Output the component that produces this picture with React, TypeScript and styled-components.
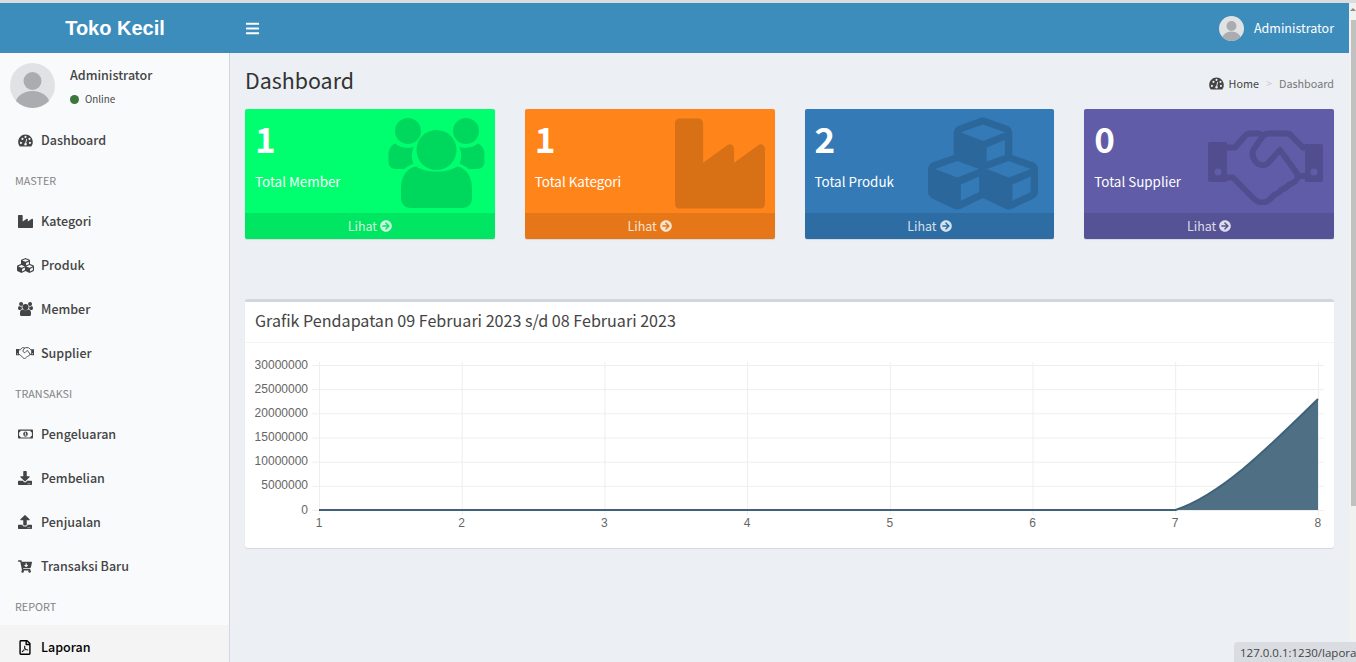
import React from 'react';
import styled, { createGlobalStyle } from 'styled-components';
import {
  FaArrowCircleRight,
  FaBars,
  FaCartArrowDown,
  FaCubes,
  FaDownload,
  FaIndustry,
  FaRegFilePdf,
  FaRegMoneyBillAlt,
  FaUpload,
} from 'react-icons/fa';

const sans = '"Noto Sans CJK SC", "Noto Sans", sans-serif';

const GlobalStyle = createGlobalStyle`
  html, body {
    margin: 0;
    height: 100%;
    overflow: hidden;
  }

  body {
    background: #ecf0f5;
    font-family: ${sans};
    font-size: 12.5px;
    line-height: 20px;
    color: #333;
  }
`;

const Window = styled.div`
  display: flex;
  flex-direction: column;
  height: 662px;
  overflow: hidden;
  position: relative;
  background: #ecf0f5;
`;

const BrowserEdge = styled.div`
  height: 3px;
  flex: none;
  background: #dcdcdc;
`;

const Frame = styled.div`
  display: flex;
  flex: 1;
  min-height: 0;
`;

const Wrapper = styled.div`
  flex: 1;
  min-width: 0;
  display: flex;
  flex-direction: column;
`;

const ScrollTrack = styled.div`
  width: 7px;
  flex: none;
  background: #f1f1f1;
  display: flex;
  flex-direction: column;
  align-items: flex-end;
  padding-top: 5px;
`;

const ScrollArrow = styled.div`
  width: 0;
  height: 0;
  border-left: 3px solid transparent;
  border-right: 3px solid transparent;
  border-bottom: 3px solid #8a8a8a;
`;

const ScrollThumb = styled.div`
  width: 5px;
  height: 486px;
  margin-top: 9px;
  background: #c1c1c1;
`;

const StatusTip = styled.div`
  position: absolute;
  right: 0;
  bottom: 0;
  width: 116px;
  height: 20px;
  padding-left: 6px;
  overflow: hidden;
  white-space: nowrap;
  background: #d9dce0;
  border-top-left-radius: 4px;
  font-family: "Open Sans", sans-serif;
  font-size: 11.5px;
  line-height: 21px;
  color: #444;
`;

const Header = styled.header`
  display: flex;
  align-items: center;
  height: 50px;
  flex: none;
  background: #3c8dbc;
  color: #fff;
`;

const Logo = styled.div`
  width: 230px;
  flex: none;
  text-align: center;
  font-family: "Liberation Sans", Arial, sans-serif;
  font-size: 20px;
  font-weight: 700;
  line-height: 50px;
`;

const MenuToggle = styled.div`
  display: flex;
  margin-left: 15px;
  font-size: 15px;
`;

const HeaderUser = styled.div`
  display: flex;
  align-items: center;
  gap: 10px;
  margin-left: auto;
  padding-right: 15px;
`;

const Body = styled.div`
  display: flex;
  flex: 1;
  min-height: 0;
`;

const Sidebar = styled.aside`
  width: 230px;
  flex: none;
  box-sizing: border-box;
  overflow: hidden;
  background: #f9fafc;
  border-right: 1px solid #d2d6de;
`;

const UserPanel = styled.div`
  display: flex;
  height: 65px;
  box-sizing: border-box;
  padding: 10px;
  gap: 15px;
`;

const UserInfo = styled.div`
  display: flex;
  flex-direction: column;
  padding-top: 2px;
`;

const UserName = styled.div`
  font-weight: 500;
  color: #444;
  line-height: 20px;
`;

const UserStatus = styled.div`
  display: flex;
  align-items: center;
  gap: 6px;
  margin-top: 5px;
  font-size: 9.8px;
  line-height: 18px;
  color: #444;
`;

const StatusDot = styled.span`
  width: 9px;
  height: 9px;
  border-radius: 50%;
  background: #3c763d;
`;

const Menu = styled.nav`
  display: flex;
  flex-direction: column;
`;

const MenuHeader = styled.div`
  height: 37px;
  box-sizing: border-box;
  padding: 10px 15px;
  font-size: 10.8px;
  line-height: 17px;
  color: #848484;
`;

const MenuItem = styled.div<{ $active?: boolean }>`
  display: flex;
  align-items: center;
  flex: none;
  height: 44px;
  padding-left: 15px;
  font-weight: 500;
  color: ${({ $active }) => ($active ? '#000' : '#444')};
  background: ${({ $active }) => ($active ? '#f4f4f5' : 'transparent')};
`;

const MenuIcon = styled.span<{ $w?: number; $h?: number }>`
  display: flex;
  align-items: center;
  justify-content: center;
  width: 20px;
  margin-right: 6px;

  svg {
    flex: none;
    width: ${({ $w }) => $w ?? 14}px;
    height: ${({ $h, $w }) => $h ?? $w ?? 14}px;
  }
`;

const Content = styled.main`
  flex: 1;
  min-width: 0;
  padding: 14px 15px 0;
  display: flex;
  flex-direction: column;
`;

const ContentHeader = styled.div`
  display: flex;
  align-items: flex-start;
  justify-content: space-between;
  height: 26px;
  margin-bottom: 16px;
`;

const PageTitle = styled.h1`
  margin: 0;
  font-size: 21.4px;
  font-weight: 400;
  line-height: 26px;
  color: #333;
`;

const Breadcrumb = styled.div`
  display: flex;
  align-items: center;
  margin-top: 6px;
  font-size: 10.8px;
  color: #444;
`;

const CrumbIcon = styled.span`
  display: flex;
  margin-right: 5px;
`;

const CrumbSep = styled.span`
  margin: 0 7px;
  color: #ccc;
`;

const CrumbCurrent = styled.span`
  color: #777;
`;

const StatGrid = styled.div`
  display: grid;
  grid-template-columns: repeat(4, 1fr);
  gap: 30px;
`;

const StatCard = styled.div<{ $bg: string }>`
  position: relative;
  height: 130px;
  overflow: hidden;
  display: flex;
  flex-direction: column;
  border-radius: 2px;
  background: ${({ $bg }) => $bg};
  color: #fff;
  box-shadow: 0 1px 1px rgba(0, 0, 0, 0.1);
`;

const StatInner = styled.div`
  flex: 1;
  padding: 8px 10px 10px;
`;

const StatValue = styled.div`
  font-size: 35px;
  font-weight: 700;
  line-height: 41px;
`;

const StatLabel = styled.div`
  margin-top: 13px;
  font-size: 13.4px;
  line-height: 20px;
`;

const StatGlyph = styled.div<{ $width: number; $height: number; $top: number; $right: number }>`
  position: absolute;
  top: ${({ $top }) => $top}px;
  right: ${({ $right }) => $right}px;
  display: flex;
  color: #000;
  opacity: 0.15;

  svg {
    width: ${({ $width }) => $width}px;
    height: ${({ $height }) => $height}px;
  }
`;

const StatFooter = styled.div`
  position: relative;
  display: flex;
  align-items: center;
  justify-content: center;
  gap: 3px;
  height: 26px;
  flex: none;
  background: rgba(0, 0, 0, 0.1);
  color: rgba(255, 255, 255, 0.8);
`;

const ChartBox = styled.section`
  margin-top: 60px;
  height: 249px;
  box-sizing: border-box;
  display: flex;
  flex-direction: column;
  background: #fff;
  border-top: 3px solid #d2d6de;
  border-radius: 3px;
  box-shadow: 0 1px 1px rgba(0, 0, 0, 0.1);
`;

const ChartHeader = styled.div`
  height: 41px;
  flex: none;
  box-sizing: border-box;
  padding: 8px 10px;
  border-bottom: 1px solid #f4f4f4;
  font-size: 16.1px;
  line-height: 20px;
  color: #444;
`;

const ChartBody = styled.div`
  padding: 10px;
`;

const ChartSvg = styled.svg`
  display: block;
  width: 1069px;
  height: 185px;
`;

const AxisText = styled.text`
  font-family: "Liberation Sans", Arial, sans-serif;
  font-size: 12px;
  fill: #666;
`;

function Gauge() {
  // the old font-awesome dashboard dial, not in the icon packs
  return (
    <svg width="15" height="13" viewBox="0 0 15 13" fill="currentColor">
      <path
        fillRule="evenodd"
        d="M7.5 0.5C3.4 0.5 0.2 3.8 0.2 7.9c0 1.6 0.5 3.1 1.4 4.3 0.2 0.2 0.4 0.3 0.7 0.3h10.4c0.3 0 0.5-0.1 0.7-0.3 0.9-1.2 1.4-2.7 1.4-4.3C14.7 3.8 11.6 0.5 7.5 0.5zM2 8.9a1 1 0 1 0 0-0.1zM3.5 4.9a1 1 0 1 0 0-0.1zM6.5 3a1 1 0 1 0 0-0.1zM10.5 4.9a1 1 0 1 0 0-0.1zM11 8.9a1 1 0 1 0 0-0.1zM6.2 10.2a1.3 1.3 0 1 0 2.6 0c0-0.5-0.3-0.9-0.6-1.1l0.8-3.6c0.1-0.3-0.1-0.5-0.3-0.6-0.3-0.1-0.5 0.1-0.6 0.4l-0.8 3.6c-0.6 0.1-1.1 0.6-1.1 1.3z"
      />
    </svg>
  );
}

function PeopleGlyph() {
  // three-person glyph of the member card, drawn to the reference
  return (
    <svg viewBox="0 0 97 90" fill="currentColor">
      <circle cx="20" cy="13" r="13" />
      <circle cx="78" cy="13" r="13" />
      <circle cx="48.5" cy="32" r="20" />
      <path d="M7 25.5c3.5 2.8 7.5 4.3 13 4.3 2.5 0 4.5-0.4 6-1-1.5 3-2.4 6.5-2.2 10.2 0.2 2.5 0.8 4.8 1.7 6.8-3.5 1-6.5 3-9 5.2H8c-5 0-7.5-3-7.5-7.5v-7c0-5 2-8.5 6.5-11z" />
      <path d="M90 25.5c-3.5 2.8-7.5 4.3-13 4.3-2.5 0-4.5-0.4-6-1 1.5 3 2.4 6.5 2.2 10.2-0.2 2.5-0.8 4.8-1.7 6.8 3.5 1 6.5 3 9 5.2H89c5 0 7.5-3 7.5-7.5v-7c0-5-2-8.5-6.5-11z" />
      <path d="M28 48.5c5 3.5 12 5 20.5 5s15.5-1.5 20.5-5c9 1.5 15 9.5 15 22.5v9c0 6-4 10-10 10H23c-6 0-10-4-10-10v-9c0-13 6-21 15-22.5z" />
    </svg>
  );
}

function HandshakeGlyph({ weight = 6 }: { weight?: number }) {
  // the outlined handshake of the older icon font, traced from the reference
  return (
    <svg viewBox="8 5 115 75" fill="none" stroke="currentColor" strokeWidth={weight} strokeLinejoin="round" strokeLinecap="round">
      <path
        fill="currentColor"
        stroke="none"
        fillRule="evenodd"
        d="M10 17h17v40H10c-1.2 0-2-0.8-2-2V19c0-1.2 0.8-2 2-2zM18 43.5a3.5 3.5 0 1 0 0 7 3.5 3.5 0 1 0 0-7zM105 19h16c1.2 0 2 0.8 2 2v34c0 1.2-0.8 2-2 2h-16zM114 43.5a3.5 3.5 0 1 0 0 7 3.5 3.5 0 1 0 0-7z"
      />
      <path d="M27 22.5h8L44 12c1.5-2 3.5-3.5 6-3.5h8c2 0 3.5 1 5 2.5L54.5 23c-2.5 3.5-2.5 8 0 12 2.5 4.5 9 7 13 3.5 3-2.5 8-9 12.5-13.5L97.5 49c1 2 0.5 4.5-1.5 6.5-2 2.5-5 3-7.5 4.5-2 3-5 4-7.5 5-1.5 3-4.5 4-7 5-3 4-7.5 7.5-12 7.5-3.5 0-6.5-2-9-4.5L33 52.5h-6" />
      <path d="M63 11c1.5-1.5 3.5-2.5 6-2.5h17c2.5 0 4.5 1 6 3l11 11h2M97.5 51H105" />
    </svg>
  );
}

function Avatar({ size }: { size: number }) {
  return (
    <svg width={size} height={size} viewBox="0 0 45 45">
      <defs>
        <clipPath id={`avatar-${size}`}>
          <circle cx="22.5" cy="22.5" r="22.5" />
        </clipPath>
      </defs>
      <circle cx="22.5" cy="22.5" r="22.5" fill="#e1e2e4" />
      <g clipPath={`url(#avatar-${size})`} fill="#abacb0">
        <circle cx="22.5" cy="18" r="9" />
        <ellipse cx="22.5" cy="41" rx="17" ry="13" />
      </g>
    </svg>
  );
}

const stats = [
  {
    value: 1,
    label: 'Total Member',
    bg: '#00ff6e',
    glyph: <PeopleGlyph />,
    w: 97,
    h: 90,
    top: 9,
    right: 10,
  },
  {
    value: 1,
    label: 'Total Kategori',
    bg: '#ff851b',
    glyph: <FaIndustry preserveAspectRatio="none" />,
    w: 90,
    h: 103,
    top: 3,
    right: 10,
  },
  {
    value: 2,
    label: 'Total Produk',
    bg: '#337ab7',
    glyph: <FaCubes preserveAspectRatio="none" />,
    w: 110,
    h: 105,
    top: 2,
    right: 16,
  },
  {
    value: 0,
    label: 'Total Supplier',
    bg: '#605ca8',
    glyph: <HandshakeGlyph />,
    w: 115,
    h: 75,
    top: 21,
    right: 11,
  },
];

const yTicks = [30000000, 25000000, 20000000, 15000000, 10000000, 5000000, 0];
const xLabels = [1, 2, 3, 4, 5, 6, 7, 8];

function RevenueChart() {
  const xOf = (i: number) => 64 + i * 142.7;
  const yOf = (i: number) => 12 + i * 24.17;
  return (
    <ChartSvg viewBox="0 0 1069 185">
      {yTicks.map((tick, i) => (
        <g key={tick}>
          <line x1="57" x2="1069" y1={yOf(i) + 0.5} y2={yOf(i) + 0.5} stroke="#eeeeee" />
          <AxisText x="53" y={yOf(i) + 3.5} textAnchor="end">
            {tick}
          </AxisText>
        </g>
      ))}
      {xLabels.map((label, i) => (
        <g key={label}>
          <line x1={xOf(i) + 0.5} x2={xOf(i) + 0.5} y1="9" y2="162" stroke="#eeeeee" />
          <AxisText x={xOf(i)} y="174" textAnchor="middle">
            {label}
          </AxisText>
        </g>
      ))}
      <path d="M64 157H920.5C965.5 142 1010 98 1063 46V157Z" fill="#4f7084" />
      <path d="M64 157H920.5C965.5 142 1010 98 1063 46" fill="none" stroke="#3f6278" strokeWidth="2" />
    </ChartSvg>
  );
}

export default function App() {
  return (
    <>
      <GlobalStyle />
      <Window>
        <BrowserEdge />
        <Frame>
          <Wrapper>
            <Header>
              <Logo>Toko Kecil</Logo>
              <MenuToggle>
                <FaBars />
              </MenuToggle>
              <HeaderUser>
                <Avatar size={25} />
                Administrator
              </HeaderUser>
            </Header>
            <Body>
              <Sidebar>
                <UserPanel>
                  <Avatar size={45} />
                  <UserInfo>
                    <UserName>Administrator</UserName>
                    <UserStatus>
                      <StatusDot />
                      Online
                    </UserStatus>
                  </UserInfo>
                </UserPanel>
                <Menu>
                  <MenuItem>
                    <MenuIcon $w={15} $h={13}>
                      <Gauge />
                    </MenuIcon>
                    Dashboard
                  </MenuItem>
                  <MenuHeader>MASTER</MenuHeader>
                  <MenuItem>
                    <MenuIcon $w={15}>
                      <FaIndustry />
                    </MenuIcon>
                    Kategori
                  </MenuItem>
                  <MenuItem>
                    <MenuIcon $w={17}>
                      <FaCubes />
                    </MenuIcon>
                    Produk
                  </MenuItem>
                  <MenuItem>
                    <MenuIcon $w={15} $h={14}>
                      <PeopleGlyph />
                    </MenuIcon>
                    Member
                  </MenuItem>
                  <MenuItem>
                    <MenuIcon $w={18} $h={12}>
                      <HandshakeGlyph weight={6} />
                    </MenuIcon>
                    Supplier
                  </MenuItem>
                  <MenuHeader>TRANSAKSI</MenuHeader>
                  <MenuItem>
                    <MenuIcon $w={15} $h={12}>
                      <FaRegMoneyBillAlt />
                    </MenuIcon>
                    Pengeluaran
                  </MenuItem>
                  <MenuItem>
                    <MenuIcon $w={14}>
                      <FaDownload />
                    </MenuIcon>
                    Pembelian
                  </MenuItem>
                  <MenuItem>
                    <MenuIcon $w={14}>
                      <FaUpload />
                    </MenuIcon>
                    Penjualan
                  </MenuItem>
                  <MenuItem>
                    <MenuIcon $w={14} $h={13}>
                      <FaCartArrowDown />
                    </MenuIcon>
                    Transaksi Baru
                  </MenuItem>
                  <MenuHeader>REPORT</MenuHeader>
                  <MenuItem $active>
                    <MenuIcon $w={12} $h={15}>
                      <FaRegFilePdf />
                    </MenuIcon>
                    Laporan
                  </MenuItem>
                </Menu>
              </Sidebar>
              <Content>
                <ContentHeader>
                  <PageTitle>Dashboard</PageTitle>
                  <Breadcrumb>
                    <CrumbIcon>
                      <Gauge />
                    </CrumbIcon>
                    Home
                    <CrumbSep>&gt;</CrumbSep>
                    <CrumbCurrent>Dashboard</CrumbCurrent>
                  </Breadcrumb>
                </ContentHeader>
                <StatGrid>
                  {stats.map((stat) => (
                    <StatCard key={stat.label} $bg={stat.bg}>
                      <StatInner>
                        <StatValue>{stat.value}</StatValue>
                        <StatLabel>{stat.label}</StatLabel>
                      </StatInner>
                      <StatGlyph $width={stat.w} $height={stat.h} $top={stat.top} $right={stat.right}>
                        {stat.glyph}
                      </StatGlyph>
                      <StatFooter>
                        Lihat <FaArrowCircleRight size={12} />
                      </StatFooter>
                    </StatCard>
                  ))}
                </StatGrid>
                <ChartBox>
                  <ChartHeader>Grafik Pendapatan 09 Februari 2023 s/d 08 Februari 2023</ChartHeader>
                  <ChartBody>
                    <RevenueChart />
                  </ChartBody>
                </ChartBox>
              </Content>
            </Body>
          </Wrapper>
          <ScrollTrack>
            <ScrollArrow />
            <ScrollThumb />
          </ScrollTrack>
        </Frame>
        <StatusTip>127.0.0.1:1230/laporan</StatusTip>
      </Window>
    </>
  );
}
